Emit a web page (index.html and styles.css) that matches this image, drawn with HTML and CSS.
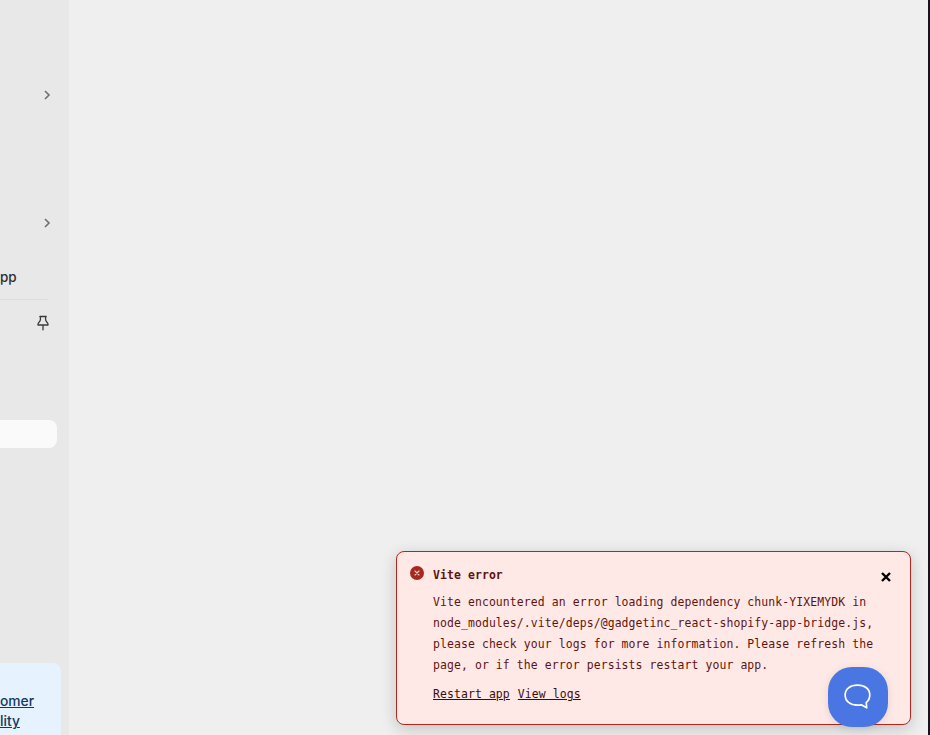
FILE: index.html
```html
<!DOCTYPE html>
<html lang="en">
<head>
<meta charset="utf-8">
<title>Vite error</title>
<link rel="stylesheet" href="styles.css">
</head>
<body>
<div class="app">
  <aside class="sidebar">
    <div class="chev-row first">
      <svg class="chev" viewBox="0 0 16 16" width="16" height="16"><path d="M6 4l4 4-4 4" fill="none" stroke="currentColor" stroke-width="1.6"/></svg>
    </div>
    <div class="chev-row second">
      <svg class="chev" viewBox="0 0 16 16" width="16" height="16"><path d="M6 4l4 4-4 4" fill="none" stroke="currentColor" stroke-width="1.6"/></svg>
    </div>
    <div class="app-label">pp</div>
    <div class="divider"></div>
    <div class="pin-row">
      <svg class="pin" viewBox="0 0 16 16" width="16" height="16"><path d="M4.800 1.500h6.400l-.6 1v2.200c0 1 .5 1.600 1.200 2.300.8.800 1.200 1.400 1.200 2.300v.7H3v-.7c0-.9.400-1.500 1.200-2.300.7-.7 1.200-1.300 1.200-2.300V2.500zM8 10v4.800" fill="none" stroke="currentColor" stroke-width="1.300" stroke-linecap="round" stroke-linejoin="round"/></svg>
    </div>
    <div class="search-box"></div>
    <div class="promo">
      <a class="promo-link" href="#">omer</a>
      <a class="promo-link" href="#">lity</a>
    </div>
  </aside>
  <main class="content"></main>
  <div class="edge"></div>
</div>

<section class="alert">
  <svg class="alert-icon" viewBox="0 0 14 14" width="14" height="14"><circle cx="7" cy="7" r="7" fill="#a8281f"/><path d="M5 5l4 4M9 5l-4 4" stroke="#f6cfc9" stroke-width="1.100" stroke-linecap="round"/></svg>
  <div class="alert-body">
    <h2 class="alert-title">Vite error</h2>
    <p class="alert-text">Vite encountered an error loading dependency chunk-YIXEMYDK in node_modules/.vite/deps/@gadgetinc_react-shopify-app-bridge.js, please check your logs for more information. Please refresh the page, or if the error persists restart your app.</p>
    <div class="alert-links"><a href="#">Restart app</a><a href="#">View logs</a></div>
  </div>
  <svg class="alert-close" viewBox="0 0 12 12" width="12" height="12"><path d="M2 2l8 8M10 2l-8 8" stroke="#000" stroke-width="2.400"/></svg>
</section>

<button class="chat" aria-label="Chat">
  <svg viewBox="0 0 28 26" width="30" height="28"><path d="M13.500 2c6.800 0 11.500 3.400 11.500 9 0 3.400-1.300 5.700-3.300 7.100l.4 5-5-2.800c-1.100.2-2.300.3-3.600.3C6.600 20.600 2 17 2 11.200 2 5.500 6.600 2 13.500 2z" fill="none" stroke="#fff" stroke-width="1.600" stroke-linejoin="round"/></svg>
</button>
</body>
</html>
```
FILE: styles.css
```css
* { box-sizing: border-box; }
html, body { margin: 0; height: 100%; overflow: hidden; }
body { font-family: Inter, "Liberation Sans", sans-serif; background: #efefef; }

.app { display: flex; width: 930px; height: 735px; }

.sidebar {
  width: 69px;
  flex: none;
  background: #e8e8e8;
  display: flex;
  flex-direction: column;
  overflow: hidden;
}
.chev-row { display: flex; justify-content: flex-end; padding-right: 14px; height: 16px; }
.chev-row.first { margin-top: 87px; }
.chev-row.second { margin-top: 112px; }
.chev { color: #707070; display: block; }

.app-label {
  margin-top: 36px;
  height: 20px;
  font-size: 13.500px;
  line-height: 20px;
  font-weight: 450;
  color: #303030;
}
.divider { margin-top: 12px; width: 48px; height: 1px; background: #dcdcdc; }
.pin-row { display: flex; justify-content: flex-end; padding-right: 18px; margin-top: 15px; height: 16px; }
.pin { color: #3a3a3a; display: block; }

.search-box {
  margin-top: 89px;
  width: 57px;
  height: 28px;
  background: #fafafa;
  border-radius: 0 8px 8px 0;
}

.promo {
  margin-top: 215px;
  width: 61px;
  flex: 1;
  background: #e7f2ff;
  border-radius: 0 8px 0 0;
  padding-top: 28px;
  display: flex;
  flex-direction: column;
  align-items: flex-start;
}
.promo-link {
  font-size: 13.800px;
  line-height: 20px;
  font-weight: 550;
  color: #103a5c;
  text-decoration: underline;
}

.content { flex: 1; background: #efefef; }
.edge { width: 2px; flex: none; background: #1a1024; }

.alert {
  position: absolute;
  left: 396px;
  top: 551px;
  width: 515px;
  height: 174px;
  background: #ffe9e6;
  border: 1px solid #b3261e;
  border-radius: 8px;
  box-shadow: 0 4px 16px rgba(0, 0, 0, 0.18);
  font-family: "DejaVu Sans Mono", "Liberation Mono", monospace;
  color: #5e1410;
  font-size: 11.450px;
  letter-spacing: 0.1px;
}
.alert-icon { position: absolute; left: 13px; top: 14px; }
.alert-body { padding: 14px 30px 0 36px; }
.alert-title { margin: 0; font-size: 11.450px; line-height: 18px; font-weight: 700; }
.alert-text { margin: 8px 0 0; line-height: 21px; }
.alert-links { margin-top: 9px; display: flex; gap: 8px; line-height: 18px; }
.alert-links a { color: #3d0d0a; text-decoration: underline; }
.alert-close { position: absolute; left: 483px; top: 19px; }

.chat {
  position: absolute;
  left: 828px;
  top: 667px;
  width: 60px;
  height: 60px;
  padding: 0;
  border: 0;
  border-radius: 24px;
  background: #4a76e3;
  box-shadow: 0 2px 8px rgba(0, 0, 0, 0.1);
  display: flex;
  align-items: center;
  justify-content: center;
}
.chat svg { display: block; }
```
